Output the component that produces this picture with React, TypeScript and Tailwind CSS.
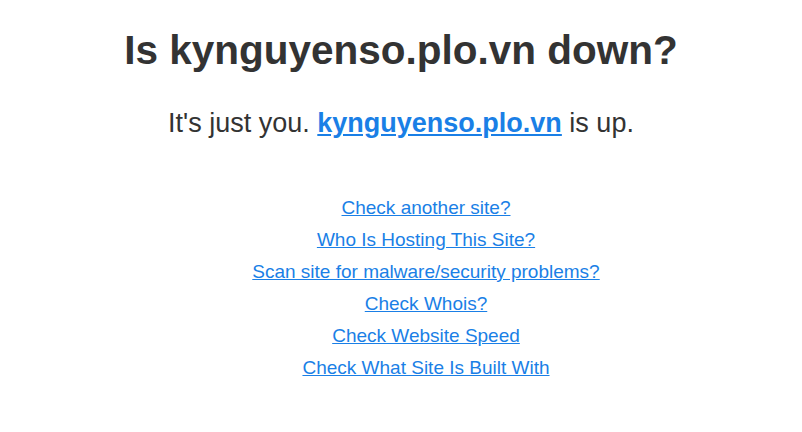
export default function App() {
  const links = [
    "Check another site?",
    "Who Is Hosting This Site?",
    "Scan site for malware/security problems?",
    "Check Whois?",
    "Check Website Speed",
    "Check What Site Is Built With",
  ];
  return (
    <div className="w-[802px] h-[432px] bg-white text-[#333333] text-center" style={{ fontFamily: '"Liberation Sans", Arial, sans-serif' }}>
      <h1 className="pt-[25px] text-[40.5px] font-bold leading-[50px]">Is kynguyenso.plo.vn down?</h1>
      <p className="mt-[33px] text-[27px] leading-[30px]">
        It's just you.{" "}
        <a href="#" className="font-bold text-[#1a7fe6] underline">kynguyenso.plo.vn</a> is up.
      </p>
      <ul className="mt-[54px] pl-[50px] flex flex-col">
        {links.map((l) => (
          <li key={l} className="text-[19px] leading-[32px]">
            <a href="#" className="text-[#1a7fe6] underline">{l}</a>
          </li>
        ))}
      </ul>
    </div>
  );
}
